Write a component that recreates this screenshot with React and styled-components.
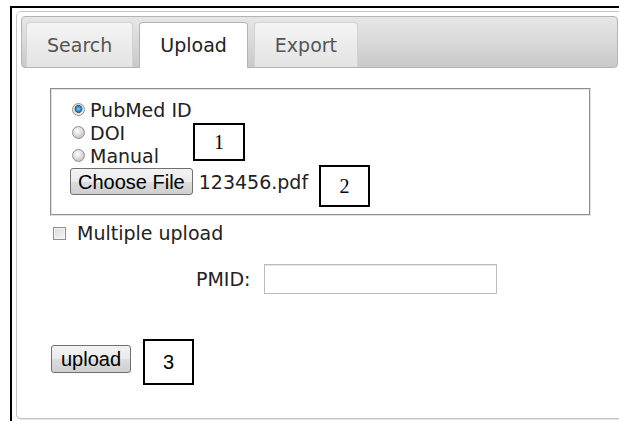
import styled, { createGlobalStyle } from 'styled-components';

const GlobalStyle = createGlobalStyle`
  html, body {
    margin: 0;
    padding: 0;
    background: #fff;
    overflow: hidden;
  }
  body {
    font-family: "DejaVu Sans", Verdana, sans-serif;
    font-size: 19px;
    color: #222;
  }
`;

const tabs = ['Search', 'Upload', 'Export'];
const sources = [
  { label: 'PubMed ID', checked: true },
  { label: 'DOI', checked: false },
  { label: 'Manual', checked: false },
];

function App() {
  return (
    <Page>
      <GlobalStyle />
      <Frame>
        <Panel>
          <TabBar>
            {tabs.map((name) => (
              <Tab key={name} $active={name === 'Upload'}>
                {name}
              </Tab>
            ))}
          </TabBar>
          <Content>
            <SourceBox>
              {sources.map((s) => (
                <RadioRow key={s.label}>
                  <Radio $checked={s.checked} />
                  {s.label}
                </RadioRow>
              ))}
              <FileRow>
                <Button>Choose File</Button>
                <FileName>123456.pdf</FileName>
              </FileRow>
            </SourceBox>
            <CheckRow>
              <Checkbox />
              <span>Multiple upload</span>
            </CheckRow>
            <FieldRow>
              <FieldLabel>PMID:</FieldLabel>
              <TextInput />
            </FieldRow>
            <SubmitRow>
              <Button $wide>upload</Button>
            </SubmitRow>
          </Content>
        </Panel>
      </Frame>

      {/* numbered callouts drawn over the form */}
      <Callout $x={193} $y={123} $w={52} $h={38} $serif>1</Callout>
      <Callout $x={319} $y={165} $w={51} $h={42} $serif>2</Callout>
      <Callout $x={143} $y={339} $w={51} $h={46}>3</Callout>
    </Page>
  );
}

const Page = styled.div`
  position: relative;
  width: 619px;
  height: 421px;
  overflow: hidden;
`;

const Frame = styled.div`
  margin: 6px 0 0 10px;
  height: 415px;
  box-sizing: border-box;
  border-top: 2px solid #000;
  border-left: 2px solid #000;
  padding: 3px 0 0 4px;
`;

const Panel = styled.div`
  width: 607px;
  height: 408px;
  box-sizing: border-box;
  border: 1px solid #c6c6c6;
  border-radius: 5px;
  padding: 4px;
  background: #fff;
  box-shadow: 0 1px 0 #e4e4e4;
`;

const TabBar = styled.div`
  display: flex;
  align-items: flex-start;
  gap: 6px;
  height: 52px;
  box-sizing: border-box;
  padding: 5px 4px 0;
  border: 1px solid #b4b4b4;
  border-radius: 4px;
  background: linear-gradient(#e6e6e6, #d9d9d9 50%, #c9c9c9);
`;

const Tab = styled.div`
  position: relative;
  display: flex;
  align-items: center;
  height: ${(p) => (p.$active ? '46px' : '45px')};
  box-sizing: border-box;
  padding: 0 20px 1px;
  border: 1px solid ${(p) => (p.$active ? '#b4b4b4' : '#d3d3d3')};
  border-bottom: none;
  border-radius: 4px 4px 0 0;
  background: ${(p) => (p.$active ? '#fff' : 'linear-gradient(#f4f4f4, #ececec 50%, #e3e3e3)')};
  color: ${(p) => (p.$active ? '#212121' : '#555')};
`;

const Content = styled.div`
  padding: 20px 0 0 29px;
`;

const SourceBox = styled.div`
  width: 541px;
  height: 128px;
  box-sizing: border-box;
  border: 2px groove #e2e2e2;
  padding: 8px 0 0 18px;
`;

const RadioRow = styled.div`
  display: flex;
  align-items: center;
  height: 23px;
`;

const Radio = styled.span`
  width: 13px;
  height: 13px;
  box-sizing: border-box;
  margin: 0 5px 0 2px;
  border-radius: 50%;
  border: 1px solid #8f8f8f;
  background: ${(p) =>
    p.$checked
      ? 'radial-gradient(circle at 50% 45%, #8fd0f4 0, #2a86c6 2.5px, #1d5f93 3.6px, #dcdcdc 4.2px, #f4f4f4 6px)'
      : 'radial-gradient(circle at 40% 35%, #fafafa 0, #e2e2e2 4px, #cdcdcd 6px)'};
`;

const FileRow = styled.div`
  display: flex;
  align-items: center;
  margin-top: 1px;
`;

const Button = styled.button`
  height: ${(p) => (p.$wide ? '28px' : '27px')};
  padding: ${(p) => (p.$wide ? '0 9px' : '0 7px')};
  border: 1px solid #707070;
  border-radius: 3px;
  background: linear-gradient(#f3f3f3, #ebebeb 50%, #dddddd 51%, #cfcfcf);
  font-family: "Liberation Sans", Arial, sans-serif;
  font-size: 20px;
  color: #000;
  line-height: 1;
`;

const FileName = styled.span`
  margin-left: 6px;
`;

const CheckRow = styled.div`
  display: flex;
  align-items: center;
  height: 24px;
  margin-top: 5px;
`;

const Checkbox = styled.span`
  width: 13px;
  height: 13px;
  box-sizing: border-box;
  margin: 0 11px 0 3px;
  border: 1px solid #8f8f8f;
  background: linear-gradient(135deg, #dcdcdc, #f6f6f6);
  box-shadow: inset 0 0 0 1px #f4f4f4;
`;

const FieldRow = styled.div`
  display: flex;
  align-items: center;
  margin-top: 19px;
  padding-left: 146px;
`;

const FieldLabel = styled.span`
  margin-right: 13px;
`;

const TextInput = styled.div`
  width: 233px;
  height: 30px;
  box-sizing: border-box;
  border: 1px solid #bcbcbc;
  box-shadow: inset 0 1px 0 #e8e8e8;
`;

const SubmitRow = styled.div`
  margin-top: 51px;
  padding-left: 1px;
`;

const Callout = styled.div`
  position: absolute;
  left: ${(p) => p.$x}px;
  top: ${(p) => p.$y}px;
  width: ${(p) => p.$w}px;
  height: ${(p) => p.$h}px;
  box-sizing: border-box;
  display: flex;
  align-items: center;
  justify-content: center;
  border: 2px solid #000;
  background: #fff;
  font-family: ${(p) => (p.$serif ? '"Liberation Serif", "Times New Roman", serif' : '"Liberation Sans", Arial, sans-serif')};
  font-size: 20px;
  color: #000;
`;

export default App;
